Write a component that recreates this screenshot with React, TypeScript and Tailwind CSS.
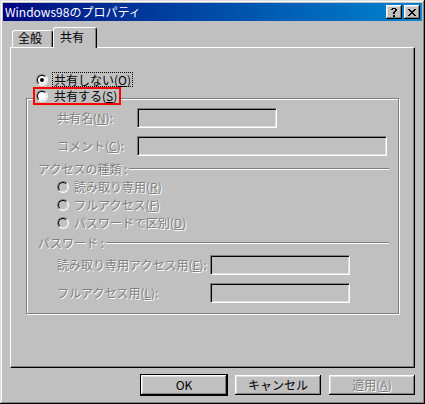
const raised =
  "bg-[#c0c0c0] shadow-[inset_-1px_-1px_0_#000,inset_1px_1px_0_#fff,inset_-2px_-2px_0_#808080,inset_2px_2px_0_#dfdfdf]";
const dim = "text-[#808080] [text-shadow:1px_1px_0_#fff]";

function Pixels({ rows }: { rows: string[] }) {
  return (
    <svg width={rows[0].length} height={rows.length} shapeRendering="crispEdges">
      {rows.flatMap((r, y) =>
        [...r].map((c, x) =>
          c === "#" ? <rect key={`${x}-${y}`} x={x} y={y} width={1} height={1} fill="#000" /> : null
        )
      )}
    </svg>
  );
}

const helpGlyph = [
  "..####..",
  ".##..##.",
  ".....##.",
  "....##..",
  "...##...",
  "...##...",
  "........",
  "...##...",
  "...##...",
];

const closeGlyph = [
  "##....##",
  ".##..##.",
  "..####..",
  "...##...",
  "..####..",
  ".##..##.",
  "##....##",
];

function Radio({ checked, disabled }: { checked?: boolean; disabled?: boolean }) {
  return (
    <span className="flex h-[12px] w-[12px] shrink-0 rounded-full border border-t-[#808080] border-l-[#808080] border-r-white border-b-white">
      <span
        className={`flex flex-1 items-center justify-center rounded-full border border-t-black border-l-black border-r-[#dfdfdf] border-b-[#dfdfdf] ${
          disabled ? "bg-[#c0c0c0]" : "bg-white"
        }`}
      >
        {checked && <span className="h-[4px] w-[4px] rounded-full bg-black" />}
      </span>
    </span>
  );
}

function Field({ className }: { className: string }) {
  return (
    <div
      className={`h-[20px] shrink-0 border border-t-[#808080] border-l-[#808080] border-r-white border-b-white bg-[#c0c0c0] shadow-[inset_1px_1px_0_#000,inset_-1px_-1px_0_#dfdfdf] ${className}`}
    />
  );
}

function Header({ text }: { text: string }) {
  return (
    <div className="flex h-[14px] items-center pl-[11px] pr-[9px]">
      <span className={`whitespace-pre ${dim}`}>{text}</span>
      <span className="ml-[2px] h-[2px] flex-1 border-t border-b border-t-[#808080] border-b-white" />
    </div>
  );
}

export default function App() {
  return (
    <div className="h-[404px] w-[425px] whitespace-nowrap bg-[#c0c0c0] p-[3px] font-['Noto_Sans_CJK_JP',sans-serif] text-[12px] leading-[12px] text-black shadow-[inset_-1px_-1px_0_#000,inset_1px_1px_0_#dfdfdf,inset_-2px_-2px_0_#808080,inset_2px_2px_0_#fff]">
      {/* title bar */}
      <div className="flex h-[18px] items-center bg-linear-to-r from-[#000080] to-[#1084d0] pl-[2px] pr-[2px]">
        <span className="flex-1 text-white">Windows98のプロパティ</span>
        <div className="flex gap-[2px]">
          <button className={`flex h-[14px] w-[16px] items-center justify-center ${raised}`}>
            <Pixels rows={helpGlyph} />
          </button>
          <button className={`flex h-[14px] w-[16px] items-center justify-center ${raised}`}>
            <Pixels rows={closeGlyph} />
          </button>
        </div>
      </div>

      <div className="px-[7px]">
        {/* tabs */}
        <div className="mt-[6px] flex items-end pl-[2px]">
          <div className="h-[17px] w-[41px] rounded-t-[3px] border-x border-t border-t-white border-l-white border-r-black pl-[5px] pt-[1px] shadow-[inset_-1px_0_0_#808080]">
            全般
          </div>
          <div className="relative z-10 -mb-px h-[21px] w-[44px] rounded-t-[3px] border-x border-t border-t-white border-l-white border-r-black bg-[#c0c0c0] pl-[6px] pt-[3px] shadow-[inset_-1px_0_0_#808080]">
            共有
          </div>
        </div>

        {/* panel */}
        <div className="h-[321px] border border-t-white border-l-white border-r-black border-b-black px-[15px] pt-[24px] shadow-[inset_-1px_-1px_0_#808080]">
          <div className="ml-[10px] flex h-[15px] items-center gap-[4px]">
            <Radio checked />
            <span className="flex h-[15px] items-center border border-dotted border-black px-[1px]">
              共有しない(<u>O</u>)
            </span>
          </div>

          <div className="relative z-10 ml-[7px] flex h-[18px] w-fit items-center gap-[6px] border-2 border-[#ff0000] bg-[#c0c0c0] pl-[1px] pr-[2px]">
            <Radio />
            <span>
              共有する(<u>S</u>)
            </span>
          </div>

          <div className="-mt-[7px] border border-[#808080] pt-[9px] pb-[10px] shadow-[1px_1px_0_#fff,inset_1px_1px_0_#fff]">
            <div className="flex items-center pl-[30px]">
              <span className={`w-[80px] ${dim}`}>
                共有名(<u>N</u>):
              </span>
              <Field className="w-[140px]" />
            </div>
            <div className="mt-[8px] flex items-center pl-[30px]">
              <span className={`w-[80px] ${dim}`}>
                コメント(<u>C</u>):
              </span>
              <Field className="w-[250px]" />
            </div>

            <div className="mt-[6px]">
              <Header text="アクセスの種類 :" />
            </div>
            <div className="mt-[2px] flex flex-col">
              {[
                ["読み取り専用(", "R", ")"],
                ["フルアクセス(", "F", ")"],
                ["パスワードで区別(", "D", ")"],
              ].map(([a, k, b]) => (
                <div key={k} className="flex h-[18px] items-center gap-[5px] pl-[30px]">
                  <Radio disabled />
                  <span className={dim}>
                    {a}
                    <u>{k}</u>
                    {b}
                  </span>
                </div>
              ))}
            </div>

            <div className="mt-[4px]">
              <Header text="パスワード :" />
            </div>
            <div className="mt-[5px] flex items-center pl-[30px]">
              <span className={`w-[153px] ${dim}`}>
                読み取り専用アクセス用(<u>E</u>):
              </span>
              <Field className="w-[140px]" />
            </div>
            <div className="mt-[8px] flex items-center pl-[30px]">
              <span className={`w-[153px] ${dim}`}>
                フルアクセス用(<u>L</u>):
              </span>
              <Field className="w-[140px]" />
            </div>
          </div>
        </div>

        {/* buttons */}
        <div className="mt-[7px] flex justify-end gap-[8px]">
          <button className={`h-[20px] w-[86px] outline outline-black ${raised}`}>OK</button>
          <button className={`h-[20px] w-[86px] ${raised}`}>キャンセル</button>
          <button className={`h-[20px] w-[86px] ${raised} ${dim}`}>
            適用(<u>A</u>)
          </button>
        </div>
      </div>
    </div>
  );
}
